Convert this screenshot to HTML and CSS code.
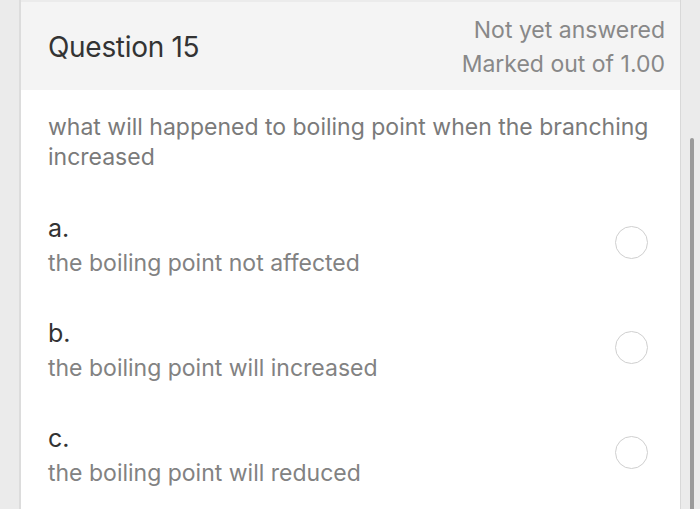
FILE: index.html
```html
<!DOCTYPE html>
<html>
<head>
<meta charset="utf-8">
<link rel="stylesheet" href="styles.css">
</head>
<body>
<div class="page">
  <div class="gutter-left"></div>
  <div class="card">
    <div class="header">
      <div class="qtitle">Question 15</div>
      <div class="status">
        <div>Not yet answered</div>
        <div>Marked out of 1.00</div>
      </div>
    </div>
    <div class="content">
      <div class="qtext">what will happened to boiling point when the branching increased</div>
      <div class="options">
        <div class="option">
          <div class="opt-text">
            <div class="letter">a.</div>
            <div class="answer">the boiling point not affected</div>
          </div>
          <div class="radio"></div>
        </div>
        <div class="option">
          <div class="opt-text">
            <div class="letter">b.</div>
            <div class="answer">the boiling point will increased</div>
          </div>
          <div class="radio"></div>
        </div>
        <div class="option">
          <div class="opt-text">
            <div class="letter">c.</div>
            <div class="answer">the boiling point will reduced</div>
          </div>
          <div class="radio"></div>
        </div>
      </div>
    </div>
  </div>
  <div class="gutter-right"><div class="thumb"></div></div>
</div>
</body>
</html>
```

FILE: styles.css
```css
html, body {
  margin: 0;
  padding: 0;
  background: #ebebeb;
}
body {
  font-family: Inter, "Noto Sans", sans-serif;
  width: 700px;
  height: 509px;
  overflow: hidden;
}
.page {
  display: flex;
  height: 509px;
}
.gutter-left {
  width: 19px;
  background: #ebebeb;
  border-right: 2px solid #dcdcdc;
}
.card {
  flex: 1;
  background: #ffffff;
  margin-top: 2px;
}
.gutter-right {
  width: 20px;
  background: #ebebeb;
  border-left: 1px solid #d8d8d8;
  display: flex;
  justify-content: center;
  padding-top: 138px;
  box-sizing: border-box;
}
.thumb {
  width: 4px;
  background: #9a9a9a;
  border-radius: 2px 2px 0 0;
  height: 380px;
  margin-left: 2px;
}
.header {
  background: #f4f4f4;
  height: 88px;
  display: flex;
  justify-content: space-between;
  padding: 0 15px 0 27px;
}
.qtitle {
  font-size: 28px;
  color: #333;
  padding-top: 28px;
  letter-spacing: -0.3px;
}
.status {
  font-size: 23px;
  color: #888;
  text-align: right;
  padding-top: 11px;
  line-height: 34px;
}
.content {
  padding: 22px 0 0 27px;
}
.qtext {
  font-size: 23px;
  color: #7a7a7a;
  line-height: 30px;
  width: 615px;
}
.options {
  padding-top: 39px;
}
.option {
  display: flex;
  justify-content: space-between;
  height: 105px;
  align-items: flex-start;
}
.letter {
  font-size: 25px;
  color: #333;
  line-height: 34px;
}
.answer {
  font-size: 23px;
  color: #828282;
  line-height: 36px;
}
.radio {
  width: 31px;
  height: 31px;
  border: 1.5px solid #cfcfcf;
  border-radius: 50%;
  margin-right: 32px;
  margin-top: 15px;
}
```
